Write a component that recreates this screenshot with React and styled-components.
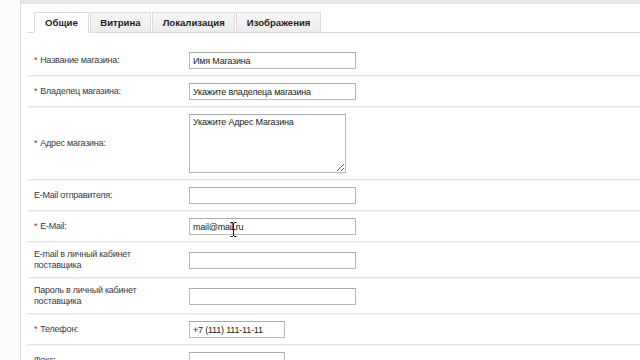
import React from "react";
import styled, { createGlobalStyle } from "styled-components";

const Global = createGlobalStyle`
  html, body { margin: 0; padding: 0; background: #fff; }
  body { font-family: "Liberation Sans", Arial, sans-serif; overflow: hidden; }
  * { box-sizing: border-box; }
`;

const Page = styled.div`
  display: flex;
  width: 640px;
  height: 360px;
  overflow: hidden;
  background: #fff;
`;

const Gutter = styled.div`
  width: 21px;
  flex: none;
  background: #fcfcfc;
  border-right: 1px solid #dedede;
`;

const Main = styled.div`
  flex: 1;
  border-top: 4px solid #e7e7e7;
  padding: 8px 0 0 6px;
`;

const TabList = styled.div`
  display: flex;
  gap: 1px;
  padding-left: 7px;
  border-bottom: 1px solid #dcdcdc;
`;

const Tab = styled.div`
  height: 21px;
  margin-bottom: -1px;
  padding: 0 ${(p) => p.$pad}px;
  display: flex;
  align-items: center;
  font-size: 9.6px;
  font-weight: bold;
  color: #1e1e1e;
  border: 1px solid #dcdcdc;
  border-bottom-color: ${(p) => (p.$active ? "#fff" : "#dcdcdc")};
  background: ${(p) => (p.$active ? "#fff" : "linear-gradient(#f7f7f7, #ececec)")};
`;

const Form = styled.div`
  padding-top: 12px;
`;

const Row = styled.div`
  display: grid;
  grid-template-columns: 155px 1fr;
  align-items: center;
  padding: 7px 0 6px 7px;
  border-bottom: 1px solid #e6e6e6;
  box-shadow: 0 1px 0 #f3f3f3;
`;

const Label = styled.div`
  font-size: 9px;
  line-height: 11px;
  letter-spacing: -0.25px;
  color: #3a3a3a;
  width: 130px;
`;

const Star = styled.span`
  color: #c8102e;
  margin-right: 3px;
`;

const Field = styled.div`
  position: relative;
  display: flex;
`;

const Input = styled.input`
  width: ${(p) => p.$w || 167}px;
  height: 17px;
  border: 1px solid #b9b9b9;
  border-top-color: #a9a9a9;
  padding: 0 3px;
  font-family: "Liberation Sans", Arial, sans-serif;
  font-size: 9px;
  letter-spacing: -0.2px;
  color: #1a1a1a;
  outline: none;
  background: #fff;
`;

const Area = styled.textarea`
  width: 157px;
  height: 59px;
  border: 1px solid #b9b9b9;
  border-top-color: #a9a9a9;
  padding: 2px 3px;
  font-family: "Liberation Sans", Arial, sans-serif;
  font-size: 9px;
  letter-spacing: -0.2px;
  color: #1a1a1a;
  outline: none;
  resize: both;
  display: block;
`;

const Cursor = styled.svg`
  position: absolute;
  left: 41px;
  top: 4px;
`;

const Req = ({ children }) => (
  <Label>
    <Star>*</Star>
    {children}
  </Label>
);

export default function App() {
  return (
    <>
      <Global />
      <Page>
        <Gutter />
        <Main>
          <TabList>
            <Tab $active $pad={10}>Общие</Tab>
            <Tab $pad={9.5}>Витрина</Tab>
            <Tab $pad={9.5}>Локализация</Tab>
            <Tab $pad={9.5}>Изображения</Tab>
          </TabList>
          <Form>
            <Row>
              <Req>Название магазина:</Req>
              <Field><Input defaultValue="Имя Магазина" /></Field>
            </Row>
            <Row>
              <Req>Владелец магазина:</Req>
              <Field><Input defaultValue="Укажите владелеца магазина" /></Field>
            </Row>
            <Row>
              <Req>Адрес магазина:</Req>
              <Field><Area defaultValue="Укажите Адрес Магазина" /></Field>
            </Row>
            <Row>
              <Label>E-Mail отправителя:</Label>
              <Field><Input /></Field>
            </Row>
            <Row>
              <Req>E-Mail:</Req>
              <Field>
                <Input defaultValue="mail@mail.ru" />
                <Cursor width="7" height="15" viewBox="0 0 7 15">
                  <path d="M0.5 0.5h2.5M4 0.5h2.5M3.5 1v13M0.5 14.5h2.5M4 14.5h2.5M1.5 7.5h4" stroke="#111" strokeWidth="1" fill="none" />
                </Cursor>
              </Field>
            </Row>
            <Row>
              <Label>E-mail в личный кабинет поставщика</Label>
              <Field><Input /></Field>
            </Row>
            <Row>
              <Label>Пароль в личный кабинет поставщика</Label>
              <Field><Input /></Field>
            </Row>
            <Row>
              <Req>Телефон:</Req>
              <Field><Input $w={96} defaultValue="+7 (111) 111-11-11" /></Field>
            </Row>
            <Row>
              <Label>Факс:</Label>
              <Field><Input $w={96} /></Field>
            </Row>
          </Form>
        </Main>
      </Page>
    </>
  );
}
